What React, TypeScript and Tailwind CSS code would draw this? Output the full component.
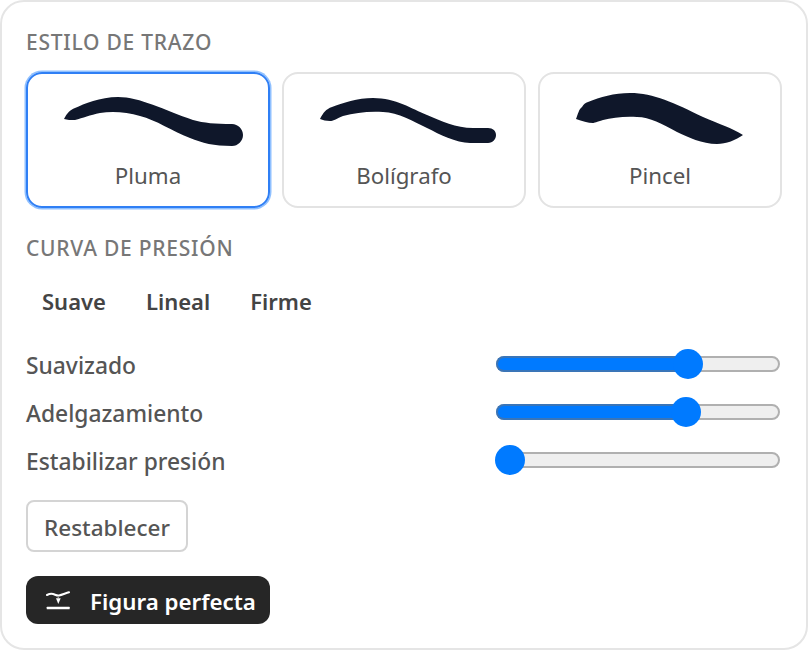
import React from 'react';

const strokes = [
  {
    name: 'Pluma',
    d: 'M12 31 C15 25 18 22 23 20 C32 16 48 9 66 9 C88 9 112 22 141 32 C152 35 163 36 180 36 C186 36 191 41 191 47 C191 53 186 58 180 58 C162 58 150 55 138 50 C120 43 104 32 88 28 C75 24 60 23 48 25 C38 27 31 30 23 32 C19 32 15 32 12 31 Z',
    active: true,
  },
  {
    name: 'Bolígrafo',
    d: 'M12 31 C15 25 18 21 24 19 C34 15 50 10 65 10 C88 10 104 21 119 27 C133 33 148 40 165 40 L180 40 C185 40 188 43 188 47 C188 51 185 55 180 55 L162 55 C148 55 131 46 119 40 C106 34 90 24 75 24 C60 23 47 25 35 28 C28 31 25 33 22 33 C18 33 15 32 12 31 Z',
    active: false,
  },
  {
    name: 'Pincel',
    d: 'M12 31 C14 26 15 21 18 19 C20 16 21 15 24 14 C36 9 50 5 66 5 C90 5 110 15 139 29 C155 36 168 40 179 47 C172 52 162 56 153 56 C138 56 124 49 113 44 C98 36 86 29 73 29 C60 28 48 30 39 32 C33 34 30 35 29 35 C24 35 18 33 12 31 Z',
    active: false,
  },
];

const sliders = [
  { label: 'Suavizado', thumb: 177 },
  { label: 'Adelgazamiento', thumb: 175 },
  { label: 'Estabilizar presión', thumb: -1 },
];

function Slider({ label, thumb }: { label: string; thumb: number }) {
  return (
    <div className="flex items-center justify-between h-12">
      <span className="pt-1 text-[22.8px] font-medium text-[#555555]">{label}</span>
      <div className="relative mr-[2px] h-4 w-[284px] rounded-full border-2 border-[#b0b0b0] bg-[#efefef]">
        {thumb > 0 && (
          <div
            className="absolute -left-[2px] -top-[2px] h-4 rounded-l-full border-2 border-r-0 border-[#3a75b8] bg-[#007aff]"
            style={{ width: thumb + 15 }}
          />
        )}
        <div
          className="absolute -top-[9px] h-[30px] w-[30px] rounded-full bg-[#007aff]"
          style={{ left: thumb - 2 }}
        />
      </div>
    </div>
  );
}

export default function App() {
  return (
    <div
      className="h-[650px] w-[808px] rounded-3xl border-2 border-[#e5e5e5] bg-white px-6 pt-6"
      style={{ fontFamily: '"Noto Sans", sans-serif' }}
    >
      <h2 className="text-[21px] font-medium leading-8 tracking-[0.75px] text-[#777777]">ESTILO DE TRAZO</h2>

      <div className="mt-[14px] grid grid-cols-3 gap-3">
        {strokes.map((s) => (
          <button
            key={s.name}
            className={
              s.active
                ? 'flex h-[136px] flex-col items-center rounded-2xl border-2 border-[#2f7ff5] pt-[14px] shadow-[0_0_0_1.5px_#8fc0ff]'
                : 'flex h-[136px] flex-col items-center rounded-2xl border-2 border-[#e3e3e3] pt-[14px]'
            }
          >
            <svg width="192" height="64" viewBox="0 0 192 64">
              <path d={s.d} fill="#0f172a" />
            </svg>
            <span className="mt-2 text-[22.3px] leading-8 text-[#555555]">{s.name}</span>
          </button>
        ))}
      </div>

      <h2 className="mt-6 text-[21px] font-medium leading-8 tracking-[0.75px] text-[#777777]">CURVA DE PRESIÓN</h2>

      <div className="mt-[22px] flex h-8 gap-2 text-[22px] font-semibold text-[#444444]">
        <button className="px-4 pb-[2px] leading-[30px]">Suave</button>
        <button className="px-4 pb-[2px] leading-[30px]">Lineal</button>
        <button className="px-4 pb-[2px] leading-[30px]">Firme</button>
      </div>

      <div className="mt-[22px]">
        {sliders.map((s) => (
          <Slider key={s.label} label={s.label} thumb={s.thumb} />
        ))}
      </div>

      <button className="mt-4 block h-[52px] w-[162px] rounded-lg border-2 border-[#d4d4d4] pt-1 text-[22.5px] font-medium text-[#555555]">
        Restablecer
      </button>

      <button className="mt-6 flex h-12 w-[244px] items-center gap-5 rounded-xl bg-[#262626] pl-5 text-[22.3px] font-semibold text-white">
        <svg width="24" height="24" viewBox="0 0 24 24" fill="none">
          <path d="M1 7 C3 6 5 5.5 7 6 C9 6.5 11 8 13 7.5 C16 7 20 5 23 4.3" stroke="white" strokeWidth="2" strokeLinecap="round" />
          <path d="M12.3 8 V10" stroke="#9a9a9a" strokeWidth="1.5" />
          <path d="M10 10.3 H14.7 L12.3 16 Z" fill="white" />
          <rect x="0.7" y="18.7" width="23" height="2.6" rx="0.5" fill="white" />
        </svg>
        <span className="pt-1">Figura perfecta</span>
      </button>
    </div>
  );
}
